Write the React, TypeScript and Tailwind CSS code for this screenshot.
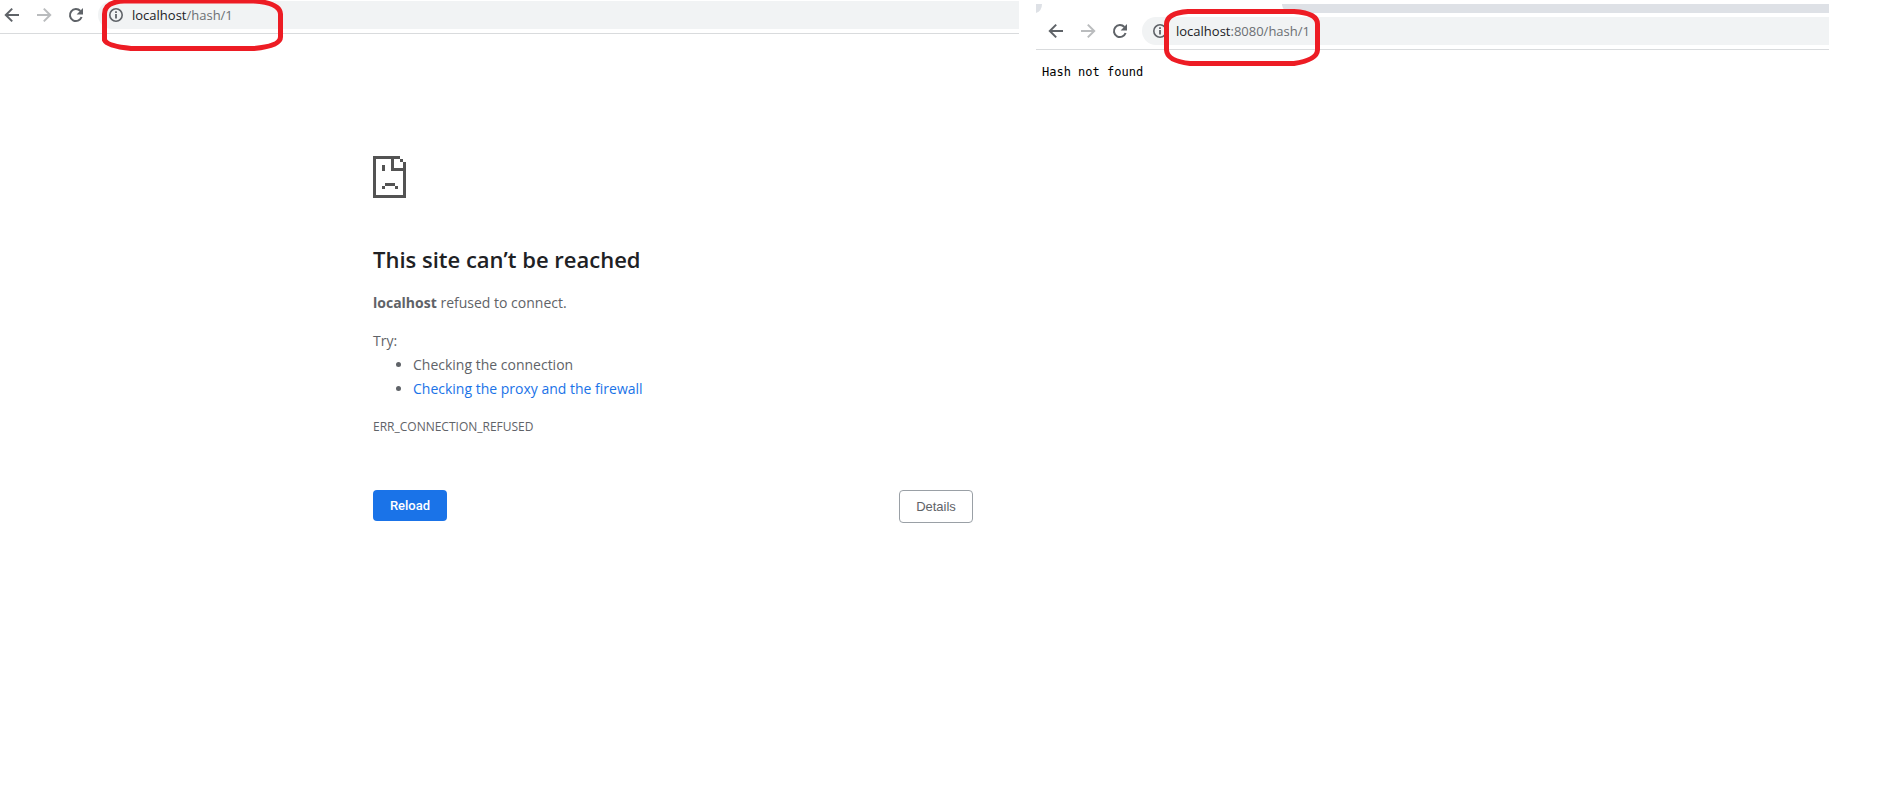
import type { ReactNode } from "react";

const ui = "font-['Segoe_UI','Open_Sans',sans-serif]";

function ArrowIcon({ forward = false }: { forward?: boolean }) {
  return (
    <svg viewBox="0 0 16 16" className={forward ? "size-4 rotate-180" : "size-4"} fill="none" stroke="currentColor" strokeWidth="2" aria-hidden="true">
      <path d="M15 8H2.5M8.2 1.6 1.8 8l6.4 6.4" />
    </svg>
  );
}

function ReloadIcon() {
  return (
    <svg viewBox="0 0 16 16" className="size-4" aria-hidden="true">
      <path d="M13.6 10A6 6 0 1 1 12.4 4" fill="none" stroke="currentColor" strokeWidth="2" />
      <path d="M15 1v6.4H8.6z" fill="currentColor" />
    </svg>
  );
}

function InfoIcon() {
  return (
    <svg viewBox="0 0 14 14" className="size-3.5 shrink-0 text-[#5f6368]" aria-hidden="true">
      <circle cx="7" cy="7" r="6.2" fill="none" stroke="currentColor" strokeWidth="1.6" />
      <path d="M6.1 6h1.8v4.5H6.1zM6.1 3.3h1.8V5H6.1z" fill="currentColor" />
    </svg>
  );
}

function SadPage() {
  return (
    <svg viewBox="0 0 33 42" className="h-[42px] w-[33px]" fill="#535353" shapeRendering="crispEdges" aria-hidden="true">
      <path d="M0 0h27v3H3v36h27V15H18V3h3v9h9V6h3v36H0zM27 3h3v3h-3zM9 9h3v6H9zM12 27h10v3H12zM9 30h3v3H9zM22 30h3v3h-3z" />
    </svg>
  );
}

function Toolbar({ host, rest, className, children }: { host: string; rest: string; className: string; children: ReactNode }) {
  return (
    <div className={`relative flex items-center border-b border-[#d9dbdd] ${className}`}>
      <div className="flex shrink-0 gap-4 text-[#5f6368]">
        <button type="button" aria-label="Back"><ArrowIcon /></button>
        <button type="button" aria-label="Forward" disabled className="text-[#babcbe]"><ArrowIcon forward /></button>
        <button type="button" aria-label="Reload page"><ReloadIcon /></button>
      </div>
      <div className="ml-3.5 flex h-7 min-w-0 flex-1 items-center gap-[9px] rounded-l-full bg-[#f1f3f4] pl-[11px]">
        <InfoIcon />
        <a href="#address" className={`${ui} whitespace-nowrap text-[13px] leading-5 text-[#6b6f73]`}>
          <span className="text-[#202124]">{host}</span>{rest}
        </a>
      </div>
      {children}
    </div>
  );
}

export default function App() {
  return (
    <div className="grid min-h-screen grid-cols-[1019fr_17fr_793fr_55fr] bg-white">
      <section className="min-w-0">
        <Toolbar host="localhost" rest="/hash/1" className="h-[34px] pb-1 pl-1">
          <svg viewBox="0 0 182 52" className="pointer-events-none absolute top-0 left-[102px] h-[52px] w-[182px]" fill="none" stroke="#ed1c24" strokeWidth="5" aria-hidden="true">
            <path d="M22 1Q2.5 2 2.5 14V40Q5 46 29 48.5H152Q178.5 46 178.5 37V14Q178 3 152 1Z" />
          </svg>
        </Toolbar>
        <main className={`${ui} mr-[46px] ml-auto max-w-[600px] pt-[122px] text-[14px] leading-6 text-[#5f6368]`}>
          <SadPage />
          <h1 className="mt-[47px] text-[22px] leading-7 font-semibold text-[#202124]">This site can’t be reached</h1>
          <p className="mt-[18px]"><strong className="font-bold">localhost</strong> refused to connect.</p>
          <p className="mt-[14px]">Try:</p>
          <ul className="list-disc pl-10">
            <li>Checking the connection</li>
            <li><a href="#proxy" className="text-[#1a73e8]">Checking the proxy and the firewall</a></li>
          </ul>
          <p className="mt-4 text-[12px] leading-5">ERR_CONNECTION_REFUSED</p>
          <div className="mt-[53px] flex items-start justify-between text-[13px] leading-4">
            <button type="button" className="h-[31px] w-[74px] rounded bg-[#1a73e8] font-['Roboto',sans-serif] font-medium text-white">Reload</button>
            <button type="button" className="h-[33px] w-[74px] rounded border border-[#9aa0a6] font-['Liberation_Sans',sans-serif]">Details</button>
          </div>
        </main>
      </section>
      <section className="col-start-3 min-w-0 pt-1">
        <div className="flex h-[9px] bg-[#dee1e6]">
          <svg viewBox="0 0 254 9" className="h-[9px] w-[254px]" fill="#fff" aria-hidden="true">
            <path d="M6 0H246V1Q247 7 254 9H0Q6 7 6 0Z" />
          </svg>
        </div>
        <Toolbar host="localhost" rest=":8080/hash/1" className="h-[37px] pl-3">
          <svg viewBox="0 0 156 58" className="pointer-events-none absolute top-[-5px] left-[128px] h-[58px] w-[156px]" fill="none" stroke="#ed1c24" strokeWidth="5" aria-hidden="true">
            <path d="M24 3.5H130Q153.5 5 153.5 16V42Q153 52 130 55.5H26Q3 53 2.5 42V16Q3 5 24 3.5Z" />
          </svg>
        </Toolbar>
        <pre className="px-1.5 pt-3 font-['DejaVu_Sans_Mono',monospace] text-[12px] leading-5 text-black">Hash not found</pre>
      </section>
    </div>
  );
}
